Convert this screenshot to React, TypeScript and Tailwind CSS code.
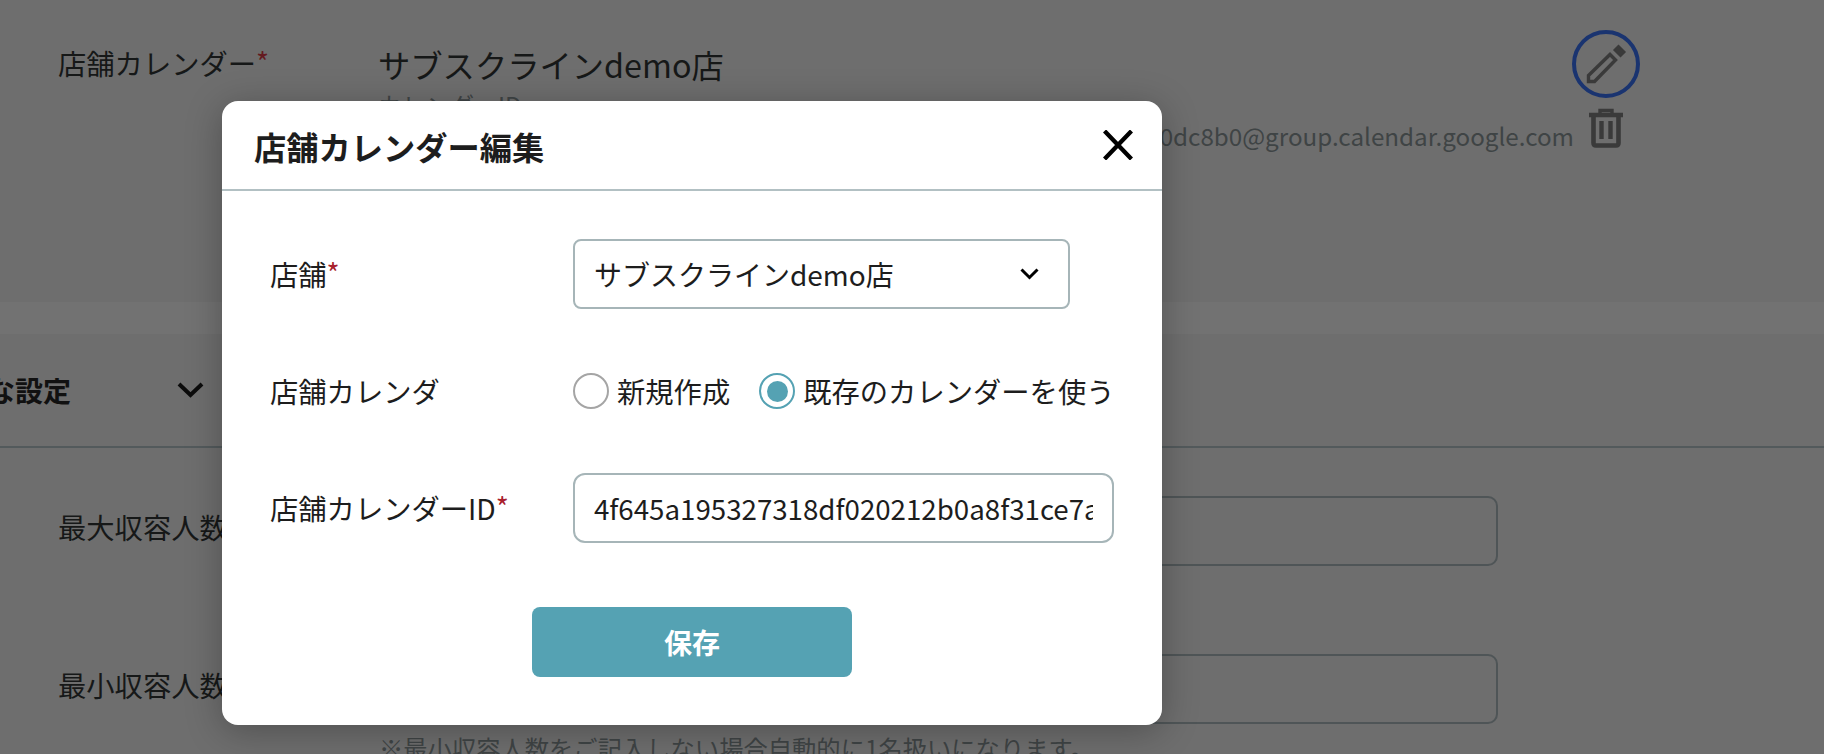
const font = { fontFamily: '"Noto Sans CJK JP", "Noto Sans", sans-serif' };

function Required() {
  return <span className="text-[#a8202c] text-[28px] align-top leading-[36px]">*</span>;
}

function BackgroundPage() {
  return (
    <div className="text-[#161818]">
      <section className="h-[302px] flex pl-[58px]">
        <div className="w-[320px] pt-[43px] text-[28.3px] leading-[40px]">
          店舗カレンダー<span className="text-[#641a20] text-[28px] align-top leading-[36px]">*</span>
        </div>
        <div className="w-[1196px] pt-[40px]">
          <p className="text-[32.3px] leading-[48px]">サブスクラインdemo店</p>
          <p className="text-[24px] leading-[36px] text-[#3f4445] -mt-[1px]">カレンダーID</p>
          <p className="text-[24.2px] leading-[36px] text-[#3f4445] text-right whitespace-nowrap -mt-[5px]">
            4f645a195327318df020212b0a8f31ce7a90dc8b0@group.calendar.google.com
          </p>
        </div>
        <div className="flex flex-col items-center pt-[30px] ml-[-2px]">
          <button className="w-[68px] h-[68px] rounded-full border-4 border-[#1a3470] flex items-center justify-center">
            <svg width="44" height="44" viewBox="0 0 44 44" fill="none">
              <path d="M4.5 39.5 V33.5 L26 12.5 L31.5 18 L10.5 39.5 Z" stroke="#3a3a3a" strokeWidth="3.4" />
              <path d="M30 8 L34.5 3.5 L41 10 L36.5 14.5 Z" fill="#3a3a3a" stroke="#3a3a3a" strokeWidth="1.5" />
            </svg>
          </button>
          <svg className="mt-[10px]" width="36" height="40" viewBox="0 0 36 40" fill="none">
            <path d="M1 7 H35" stroke="#3a3a3a" strokeWidth="4.4" />
            <path d="M12 5 V2.5 H24 V5" stroke="#3a3a3a" strokeWidth="3.4" />
            <path d="M5.5 8 V35 Q5.5 37.5 8 37.5 H28 Q30.5 37.5 30.5 35 V8" stroke="#3a3a3a" strokeWidth="4.6" />
            <path d="M13.5 13 V31 M22.5 13 V31" stroke="#3a3a3a" strokeWidth="4.4" />
          </svg>
        </div>
      </section>
      <div className="h-[32px] bg-[#727272]" />
      <header className="h-[114px] border-b-2 border-[#535a5c] flex items-center pb-[1px]">
        <h2 className="ml-[-69px] w-[246px] text-[28px] font-bold leading-[40px] text-[#111]">詳細な設定</h2>
        <svg width="27" height="16" viewBox="0 0 27 16" fill="none">
          <path d="M2 2 L13.5 13 L25 2" stroke="#0c0c0c" strokeWidth="4" />
        </svg>
      </header>
      <div className="flex pl-[58px] pt-[48px] items-center h-[117px]">
        <div className="w-[321px] text-[28.3px] leading-[40px] mb-[8px]">最大収容人数</div>
        <div className="w-[1119px] h-[70px] rounded-[10px] border-2 border-[#4f5557]" />
      </div>
      <div className="flex pl-[58px] pt-[89px] items-center">
        <div className="w-[321px] text-[28.3px] leading-[40px] mb-[8px]">最小収容人数</div>
        <div className="w-[1119px] h-[70px] rounded-[10px] border-2 border-[#4f5557]" />
      </div>
      <p className="pl-[379px] mt-[6px] text-[24.3px] leading-[36px] text-[#3f4445]">
        ※最小収容人数をご記入しない場合自動的に1名扱いになります。
      </p>
    </div>
  );
}

function Radio({ checked, label }: { checked?: boolean; label: string }) {
  return (
    <label className="flex items-center gap-[8px]">
      <span
        className={`w-[36px] h-[36px] rounded-full border-2 flex items-center justify-center ${
          checked ? "border-[#55a2b3]" : "border-[#a5a5a5]"
        }`}
      >
        {checked && <span className="w-[21px] h-[21px] rounded-full bg-[#55a2b3]" />}
      </span>
      <span className="whitespace-nowrap text-[28.3px]">{label}</span>
    </label>
  );
}

function EditModal() {
  return (
    <div className="absolute left-[222px] top-[101px] w-[940px] h-[624px] bg-white rounded-[16px] shadow-[0_6px_36px_rgba(0,0,0,0.28)] text-[#1d1d1d]">
      <div className="h-[90px] border-b-2 border-[#b2c0c3] flex items-center justify-between pl-[32px] pr-[29px]">
        <h1 className="text-[32.25px] font-bold leading-[48px] mt-[2px]">店舗カレンダー編集</h1>
        <svg width="30" height="30" viewBox="0 0 30 30" fill="none">
          <path d="M1.5 1 L28.5 29 M28.5 1 L1.5 29" stroke="#000" strokeWidth="4.4" />
        </svg>
      </div>
      <div className="pl-[48px] text-[28px] leading-[40px]">
        <div className="flex items-center mt-[48px] h-[70px]">
          <div className="w-[303px] text-[28.3px]">
            店舗<Required />
          </div>
          <div className="w-[497px] h-[70px] rounded-[8px] border-2 border-[#a6b5b8] flex items-center justify-between pl-[19px] pr-[29px]">
            <span>サブスクラインdemo店</span>
            <svg width="19" height="12" viewBox="0 0 19 12" fill="none">
              <path d="M1.5 1.5 L9.5 9.5 L17.5 1.5" stroke="#000" strokeWidth="3" />
            </svg>
          </div>
        </div>
        <div className="flex items-center mt-[47px] h-[70px]">
          <div className="w-[303px] text-[28.3px]">店舗カレンダ</div>
          <div className="flex gap-[29px]">
            <Radio label="新規作成" />
            <Radio checked label="既存のカレンダーを使う" />
          </div>
        </div>
        <div className="flex items-center mt-[47px] h-[70px]">
          <div className="w-[303px] text-[28.3px]">
            店舗カレンダーID<Required />
          </div>
          <input
            readOnly
            value="4f645a195327318df020212b0a8f31ce7a90dc8b0@group.calendar.google.com"
            className="w-[541px] h-[70px] rounded-[12px] border-2 border-[#a6b5b8] px-[19px] text-[27.7px] outline-none"
          />
        </div>
      </div>
      <button className="block mt-[64px] ml-[310px] w-[320px] h-[70px] rounded-[8px] bg-[#55a2b3] text-white text-[28px] font-bold">
        保存
      </button>
    </div>
  );
}

export default function App() {
  return (
    <div className="relative w-[1824px] h-[754px] overflow-hidden bg-[#6e6e6e]" style={font}>
      <BackgroundPage />
      <EditModal />
    </div>
  );
}
